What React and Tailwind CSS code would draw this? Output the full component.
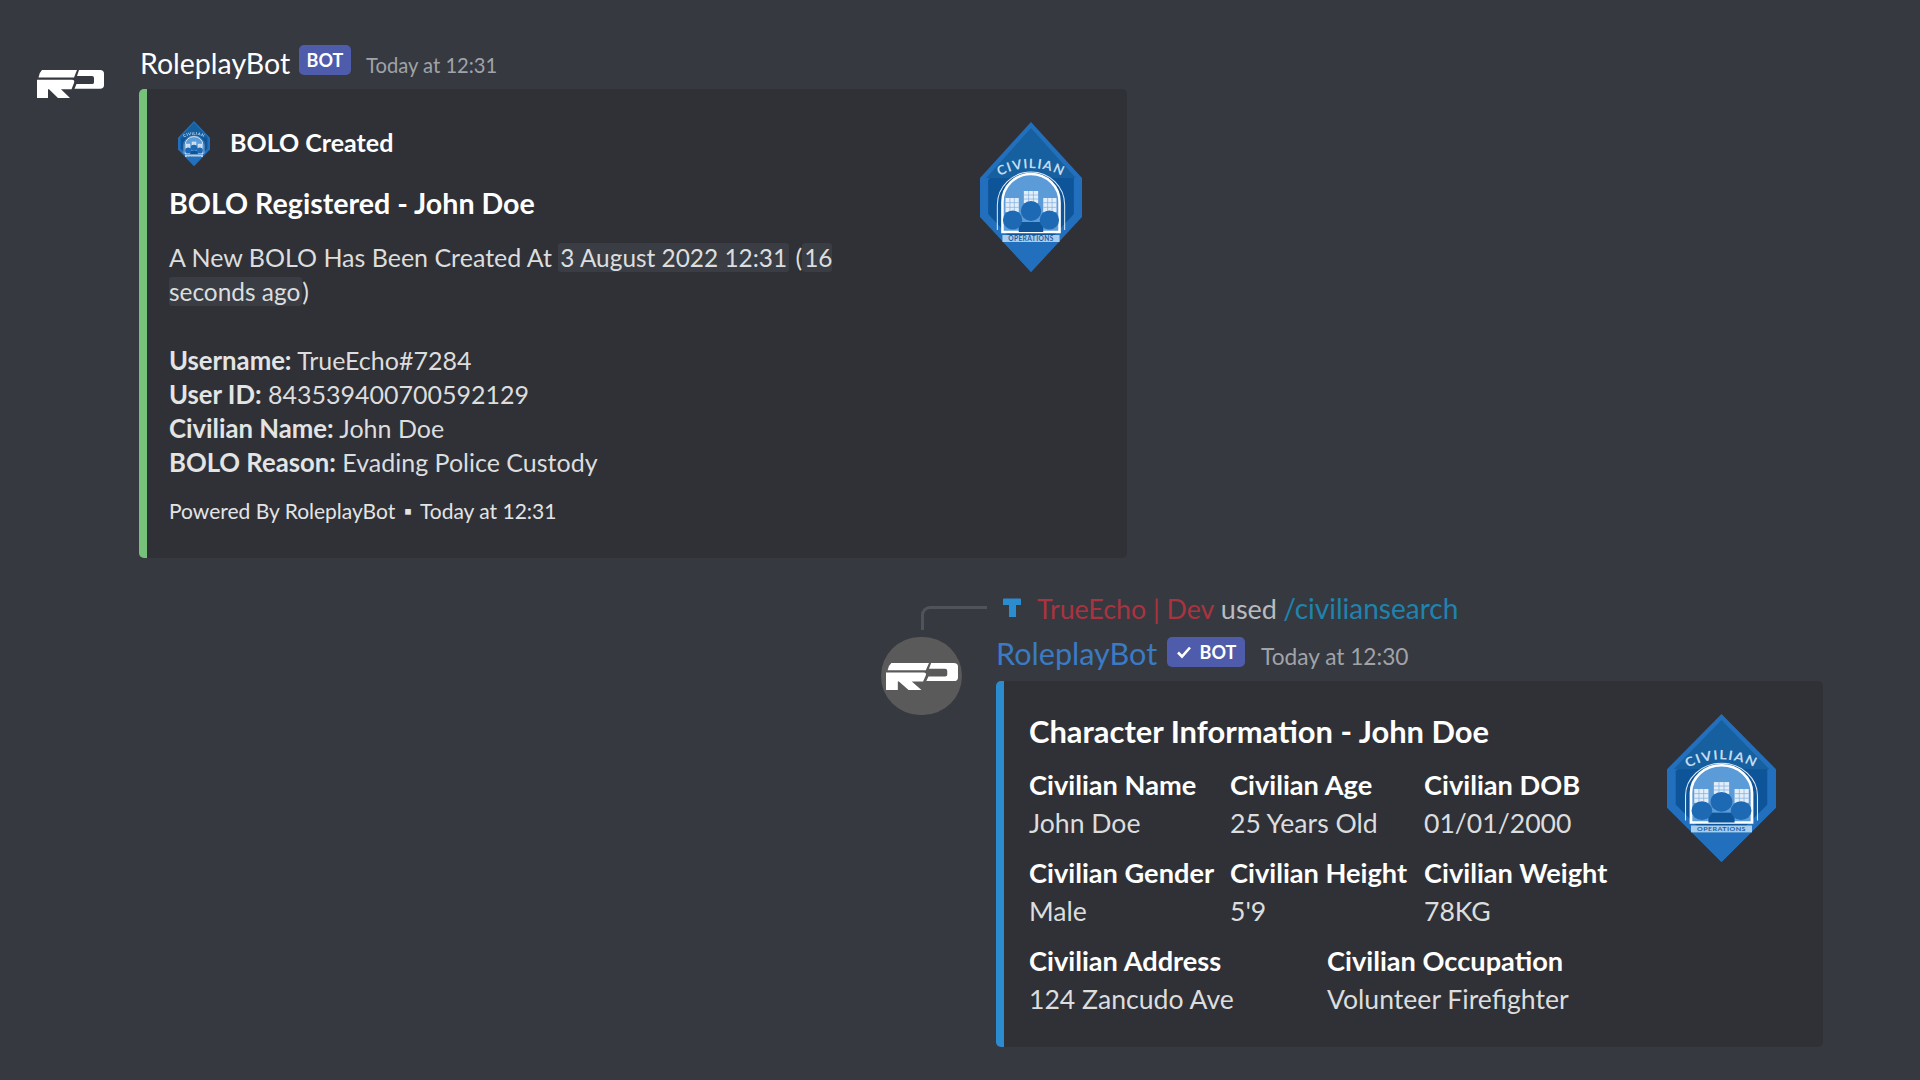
import React from "react";

function RpLogo({ className }) {
  return (
    <svg viewBox="7 10 67 30" preserveAspectRatio="none" className={className} fill="#ffffff">
      <path d="M12 10H47L44 18H8.5Q9 13 12 10Z" />
      <path d="M7 20.5H42Q45 20.5 44 24L41.5 30.5H31L40 40H28L19 30.5H18V40H7Z" />
      <path d="M49 10H70Q74 10 74 14V26Q74 30 70 30H44.5L46.5 25H62Q64 25 64 23V18.5Q64 16.5 62 16.5H47Z" />
    </svg>
  );
}

function Windows({ x, y, w, h }) {
  return (
    <g>
      <rect x={x} y={y} width={w} height={h} fill="#e3eefa" />
      <path d={`M${x + w / 3} ${y}V${y + h}M${x + (2 * w) / 3} ${y}V${y + h}M${x} ${y + h / 3}H${x + w}M${x} ${y + (2 * h) / 3}H${x + w}`} stroke="#7fb0e0" strokeWidth="0.7" />
    </g>
  );
}

function CivilianBadge({ className, id }) {
  return (
    <svg viewBox="0 0 100 150" preserveAspectRatio="none" className={className}>
      <defs>
        <path id={id} d="M16 56 Q50 36 84 56" />
      </defs>
      <polygon points="50,0 100,56 100,95 50,150 0,95 0,56" fill="#2270bd" />
      <polygon points="50,9 92,56 92,92 50,138 8,92 8,58" fill="#0e5499" />
      <polygon points="6,56 50,6 94,56" fill="#17609f" />
      <polygon points="22,119 78,119 50,150" fill="#2270bd" />
      <text fontFamily="Lato, sans-serif" fontWeight="700" fontSize="13" letterSpacing="1.2" fill="#c3dcf3" textAnchor="middle">
        <textPath href={`#${id}`} startOffset="50%">CIVILIAN</textPath>
      </text>
      <path d="M17 108V83a33 33 0 0 1 66 0V108" fill="none" stroke="#dbe9f7" strokeWidth="1" />
      <path d="M22 110V80a28 28 0 0 1 56 0V110Z" fill="#5b9bd8" stroke="#ffffff" strokeWidth="2.5" />
      <Windows x={25} y={76} w={13} h={14} />
      <Windows x={43} y={69} w={14} h={12} />
      <Windows x={62} y={76} w={13} h={14} />
      <rect x="38" y="100" width="24" height="10" fill="#0e5499" />
      <circle cx="32" cy="98" r="9.5" fill="#1d69b3" />
      <circle cx="50" cy="89" r="10" fill="#1d69b3" />
      <circle cx="68" cy="98" r="9.5" fill="#1d69b3" />
      <rect x="22" y="113" width="56" height="7" fill="#a9cdec" />
      <text x="50" y="119" fontFamily="Lato, sans-serif" fontWeight="700" fontSize="6.5" letterSpacing="0.4" fill="#1d5fa3" textAnchor="middle">OPERATIONS</text>
    </svg>
  );
}

function Stamp({ children, className }) {
  return <span className={`bg-[#3a3d44] rounded-[3px] text-[24.4px] ${className}`}>{children}</span>;
}

function KV({ k, v }) {
  return (
    <div className="h-[34px] leading-[34px] whitespace-nowrap">
      <span className="font-bold text-[25.7px] text-[#e3e4e5]">{k}</span> {v}
    </div>
  );
}

function Field({ k, v }) {
  return (
    <div className="whitespace-nowrap">
      <div className="h-[34px] leading-[34px] font-bold text-[27.2px] text-white">{k}</div>
      <div className="h-[34px] leading-[34px] text-[26.6px] mt-[4px]">{v}</div>
    </div>
  );
}

function BotBadge({ verified, className }) {
  return (
    <span className={`inline-flex items-center justify-center h-[30px] rounded-[5px] bg-[#4f5cab] text-white font-bold text-[18px] leading-[30px] ${className}`}>
      {verified && (
        <svg viewBox="0 0 16 16" className="w-[16px] h-[16px] mr-[8px]" fill="none" stroke="#ffffff" strokeWidth="2.6">
          <path d="M2 8.5L6 12.5L14 3.5" />
        </svg>
      )}
      BOT
    </span>
  );
}

export default function App() {
  return (
    <div className="w-[1920px] h-[1080px] overflow-hidden bg-[#363940] text-[#dcddde] text-[25px] [font-family:Lato,'Noto_Sans',sans-serif]">
      <div className="flex pt-[45px]">
        <div className="w-[139px] pl-[37px] pt-[25px] shrink-0">
          <RpLogo className="w-[67px] h-[28px]" />
        </div>
        <div>
          <div className="flex h-[44px] items-start">
            <span className="text-[28.5px] leading-[36px] text-white w-[160px] pl-[1px]">RoleplayBot</span>
            <BotBadge className="w-[52px]" />
            <span className="text-[20.2px] leading-[40px] text-[#a0a3a8] ml-[15px]">Today at 12:31</span>
          </div>
          <div className="flex justify-between w-[988px] h-[469px] bg-[#303136] border-l-[8px] border-[#77c27b] rounded-[5px]">
            <div className="pl-[22px] pt-[32px]">
              <div className="flex items-center h-[44px]">
                <CivilianBadge id="civ-small" className="w-[32px] h-[45px] ml-[9px] blur-[0.6px]" />
                <span className="ml-[20px] font-bold text-[25px] text-white">BOLO Created</span>
              </div>
              <div className="mt-[21px] h-[34px] leading-[34px] font-bold text-[28.6px] text-white">BOLO Registered - John Doe</div>
              <div className="mt-[20px] whitespace-nowrap">
                <div className="h-[34px] leading-[34px]">
                  A New BOLO Has Been Created At <Stamp className="px-[2px]">3 August 2022 12:31</Stamp> (<Stamp className="pl-[2px]">16</Stamp>
                </div>
                <div className="h-[34px] leading-[34px]">
                  <Stamp className="pr-[2px]">seconds ago</Stamp>)
                </div>
              </div>
              <div className="mt-[35px]">
                <KV k="Username:" v="TrueEcho#7284" />
                <KV k="User ID:" v="843539400700592129" />
                <KV k="Civilian Name:" v="John Doe" />
                <KV k="BOLO Reason:" v="Evading Police Custody" />
              </div>
              <div className="mt-[15px] h-[34px] leading-[34px] text-[21px] text-[#e3e4e5] whitespace-nowrap">
                Powered By RoleplayBot <span className="mx-[3px]">▪</span> Today at 12:31
              </div>
            </div>
            <div className="pt-[33px] pr-[45px]">
              <CivilianBadge id="civ-one" className="w-[102px] h-[150px]" />
            </div>
          </div>
        </div>
      </div>

      <div className="ml-[882px] mt-[33px]">
        <div className="flex h-[34px] items-start">
          <div className="ml-[39px] mt-[15px] w-[66px] h-[24px] border-l-[3px] border-t-[3px] border-[#4f545c] rounded-tl-[9px] shrink-0" />
          <svg viewBox="0 0 20 20" className="w-[20px] h-[20px] ml-[15px] mt-[7px] shrink-0">
            <path d="M1 1.5Q1 0.5 2 0.5H18Q19 0.5 19 1.5V7H14V19H7V7H1Z" fill="#2b8ccf" />
          </svg>
          <div className="ml-[15px] h-[34px] leading-[34px] whitespace-nowrap">
            <span className="text-[#a9343f] text-[26.8px]">TrueEcho | Dev</span> <span className="text-[#b9bbbe] text-[27px]">used</span> <span className="text-[#1f83ae] text-[28px]">/civiliansearch</span>
          </div>
        </div>
        <div className="flex mt-[12px] -ml-[1px]">
          <div className="w-[81px] h-[78px] rounded-full bg-[#5a5a5a] flex items-center justify-center shrink-0">
            <RpLogo className="w-[72px] h-[27px]" />
          </div>
          <div className="ml-[34px]">
            <div className="flex h-[44px] items-start">
              <span className="text-[30.6px] leading-[36px] text-[#3a7bc4] w-[171px] -mt-[1px]">RoleplayBot</span>
              <BotBadge verified className="w-[78px]" />
              <span className="text-[22.7px] leading-[40px] text-[#a0a3a8] ml-[16px]">Today at 12:30</span>
            </div>
            <div className="flex justify-between w-[827px] h-[366px] bg-[#303136] border-l-[8px] border-[#2b8ccf] rounded-[5px]">
              <div className="pl-[25px] pt-[34px]">
                <div className="h-[34px] leading-[34px] font-bold text-[30.9px] text-white">Character Information - John Doe</div>
                <div className="grid grid-cols-[201px_194px_auto] gap-y-[16px] mt-[19px]">
                  <Field k="Civilian Name" v="John Doe" />
                  <Field k="Civilian Age" v="25 Years Old" />
                  <Field k="Civilian DOB" v="01/01/2000" />
                  <Field k="Civilian Gender" v="Male" />
                  <Field k="Civilian Height" v="5'9" />
                  <Field k="Civilian Weight" v="78KG" />
                </div>
                <div className="grid grid-cols-[298px_auto] mt-[16px]">
                  <Field k="Civilian Address" v="124 Zancudo Ave" />
                  <Field k="Civilian Occupation" v="Volunteer Firefighter" />
                </div>
              </div>
              <div className="pt-[33px] pr-[47px]">
                <CivilianBadge id="civ-two" className="w-[109px] h-[148px]" />
              </div>
            </div>
          </div>
        </div>
      </div>
    </div>
  );
}
